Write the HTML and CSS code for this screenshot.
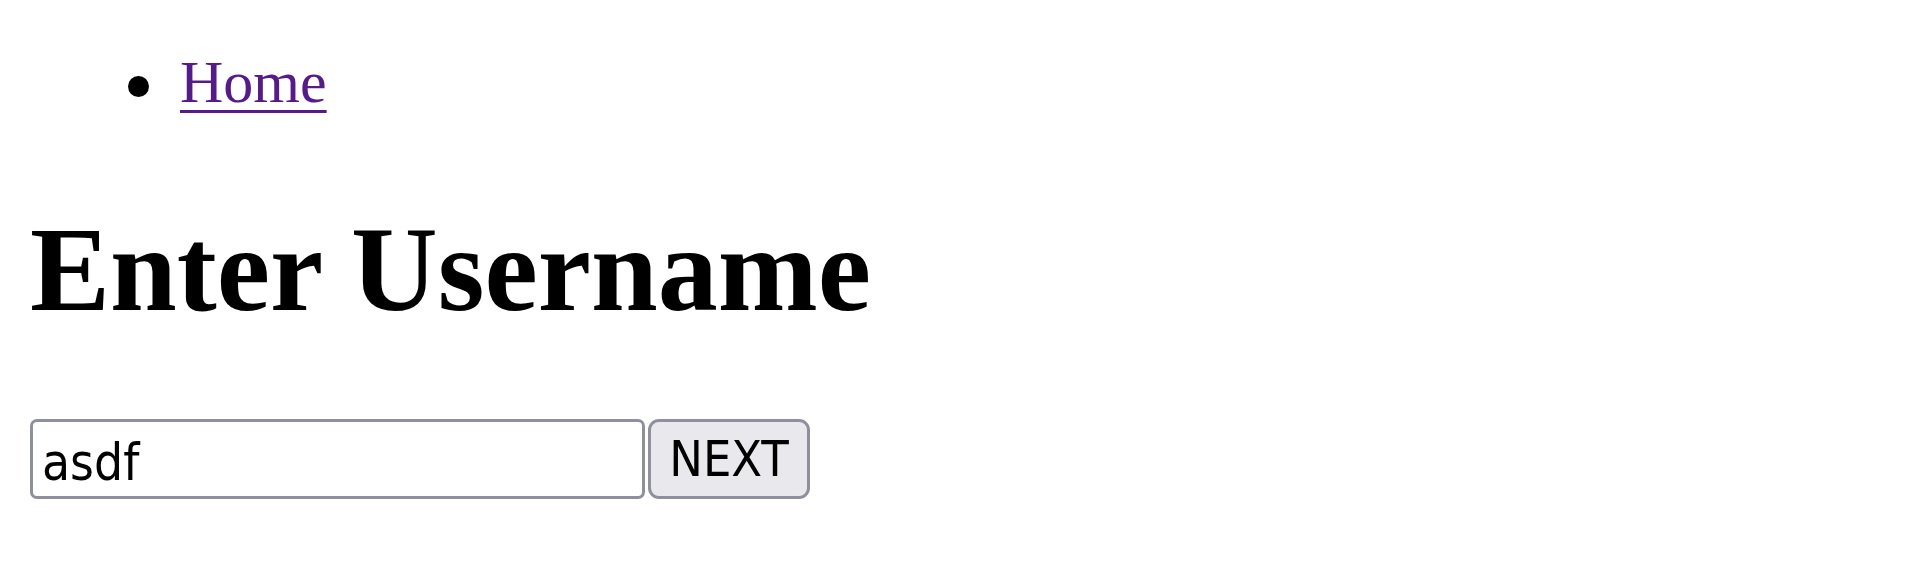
FILE: index.html
```html
<!DOCTYPE html>
<html lang="en">
<head>
<meta charset="utf-8">
<title>Enter Username</title>
<link rel="stylesheet" href="styles.css">
</head>
<body>
<ul class="nav">
  <li class="nav-item"><a class="nav-link" href="#">Home</a></li>
</ul>
<h1 class="title">Enter Username</h1>
<form class="user-form">
  <input class="user-input" type="text" value="asdf">
  <button class="next-btn" type="button">NEXT</button>
</form>
</body>
</html>
```

FILE: styles.css
```css
html, body {
  margin: 0;
  padding: 0;
  background: #ffffff;
}

body {
  padding: 0 30px;
  font-family: "Liberation Serif", "Times New Roman", serif;
  font-size: 60px;
  color: #000000;
}

.nav {
  margin: 48px 0 0 0;
  padding-left: 150px;
  list-style: none;
  line-height: normal;
}

.nav-item {
  position: relative;
}

.nav-item::before {
  content: "";
  position: absolute;
  left: -52px;
  top: 28px;
  width: 21px;
  height: 21px;
  border-radius: 50%;
  background: #000000;
}

.nav-link {
  color: #551a8b;
  text-decoration: underline;
  text-decoration-thickness: 3px;
  text-underline-offset: 8px;
}

.title {
  font-size: 120px;
  font-weight: bold;
  margin: 84px 0 80px 0;
  line-height: normal;
}

.user-form {
  display: flex;
  align-items: flex-start;
  gap: 3px;
  margin: 0;
}

.user-input,
.next-btn {
  box-sizing: border-box;
  height: 80px;
  margin: 0;
  font-family: "DejaVu Sans Condensed", "DejaVu Sans", sans-serif;
  font-stretch: condensed;
  font-size: 50px;
  color: #000000;
  border: 3px solid #8f8f9d;
  line-height: normal;
}

.user-input {
  width: 615px;
  padding: 6px 9px 0 9px;
  font-size: 51px;
  background: #ffffff;
  border-radius: 7px;
  outline: none;
}

.next-btn {
  width: 162px;
  padding: 4px 0;
  background: #e9e9ed;
  border-radius: 11px;
  text-align: center;
}
```
